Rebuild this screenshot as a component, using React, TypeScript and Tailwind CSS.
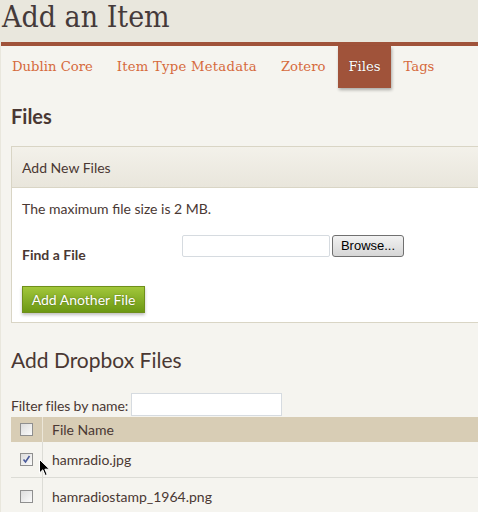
import React from 'react';

const tabs = ['Dublin Core', 'Item Type Metadata', 'Zotero', 'Files', 'Tags'];

function Checkbox({ checked }: { checked?: boolean }) {
  return (
    <span className="flex h-[13px] w-[13px] items-center justify-center border border-[#8f8f8f] bg-gradient-to-br from-[#dcdcdc] to-[#fbfbfb]">
      {checked && (
        <svg width="9" height="9" viewBox="0 0 9 9">
          <path d="M1.5 4.5 L3.5 7 L7.5 1" fill="none" stroke="#4a5a9a" strokeWidth="1.6" />
        </svg>
      )}
    </span>
  );
}

export default function App() {
  return (
    <div className="h-[512px] w-[478px] overflow-hidden bg-[#e9e7dd] font-['Lato',sans-serif] text-[#4a3833]">
      {/* Title */}
      <div className="h-[42px] pl-[2px] pt-[1px]">
        <h1 className="font-['DejaVu_Serif_Condensed','DejaVu_Serif',serif] text-[30px] leading-[31px] text-[#453a3a]">Add an Item</h1>
      </div>

      <div className="ml-[1px] h-[470px] border-t-[4px] border-[#a0533a] bg-[#f5f4ef]">
        {/* Tabs */}
        <nav className="flex h-[42px] items-center pl-[11px] font-['DejaVu_Serif',serif] text-[13.2px] text-[#d66a3c]">
          {tabs.map((t, i) =>
            t === 'Files' ? (
              <span key={t} className="-mt-[1px] ml-[1px] mr-[1px] flex h-[42px] items-center bg-[#a0533a] px-[10px] text-white shadow-[1px_2px_3px_rgba(0,0,0,0.3)] [text-shadow:0_0_1px_rgba(0,0,0,0.4)]">
                {t}
              </span>
            ) : (
              <span
                key={t}
                className={i === 0 ? 'pr-[12px]' : i === 1 ? 'px-[12px] tracking-[0.25px]' : 'px-[12px]'}
              >
                {t}
              </span>
            )
          )}
        </nav>

        <div className="pl-[10px]">
          <h2 className="mt-[15px] text-[20px] font-bold leading-[26px] text-[#4a3833]">Files</h2>

          {/* Add New Files */}
          <div className="mt-[17px] border border-r-0 border-[#d9d5c5] bg-white">
            <div className="flex h-[41px] items-center border-b border-[#d9d5c5] bg-gradient-to-b from-[#f3f1ea] to-[#e9e6dc] pl-[10px] text-[14px]">
              Add New Files
            </div>
            <div className="pl-[10px] pb-[9px]">
              <p className="pt-[12px] text-[14px] leading-[18px]">The maximum file size is 2 MB.</p>
              <div className="mt-[12px] flex">
                <span className="mt-[16px] w-[160px] text-[14px] font-bold leading-[18px]">Find a File</span>
                <div className="mt-[5px] flex items-start gap-[2px]">
                  <span className="h-[22px] w-[148px] rounded-[2px] border border-[#d6dbe0] bg-white" />
                  <span className="flex h-[22px] w-[72px] items-center justify-center rounded-[3px] border border-[#707070] bg-gradient-to-b from-[#f2f2f2] to-[#d6d6d6] font-['Liberation_Sans',sans-serif] text-[13px] text-black">
                    Browse...
                  </span>
                </div>
              </div>
              <button className="mt-[22px] h-[27px] w-[123px] border border-[#6f8f1a] bg-gradient-to-b from-[#a2c73a] to-[#6c9812] text-[14px] text-white shadow-[0_2px_3px_rgba(0,0,0,0.25)] [text-shadow:0_0_2px_rgba(0,0,0,0.35)]">
                Add Another File
              </button>
            </div>
          </div>

          {/* Dropbox */}
          <h2 className="mt-[23px] text-[21px] leading-[28px] text-[#4a3833]">Add Dropbox Files</h2>
          <div className="mt-[19px] flex items-end gap-[3px] text-[14px]">
            <span className="pb-[1px] leading-[18px] tracking-[-0.1px]">Filter files by name:</span>
            <span className="h-[23px] w-[151px] border border-[#d6dbe0] bg-white" />
          </div>
          <div className="relative mt-[1px] text-[14px]">
            <div className="flex h-[25px] bg-[#d8cdb5]">
              <div className="flex w-[32px] items-center justify-center border-r border-[#ece6d8]"><Checkbox /></div>
              <div className="flex items-center pl-[9px]">File Name</div>
            </div>
            <div className="flex h-[36px] border-b border-[#dcdcd6]">
              <div className="flex w-[32px] items-center justify-center border-r border-[#dcdcd6]"><Checkbox checked /></div>
              <div className="flex items-center pl-[9px]">hamradio.jpg</div>
            </div>
            <div className="flex h-[36px]">
              <div className="flex w-[32px] items-center justify-center border-r border-[#dcdcd6]"><Checkbox /></div>
              <div className="flex items-center pl-[9px]">hamradiostamp_1964.png</div>
            </div>
            {/* mouse cursor */}
            <svg className="absolute left-[28px] top-[42px]" width="12" height="18" viewBox="0 0 12 18">
              <path d="M0.5 0.5 L0.5 14 L3.8 10.8 L6.2 16.5 L8.2 15.6 L5.9 10.2 L10.5 10.2 Z" fill="#000" stroke="#fff" strokeWidth="1" />
            </svg>
          </div>
        </div>
      </div>
    </div>
  );
}
